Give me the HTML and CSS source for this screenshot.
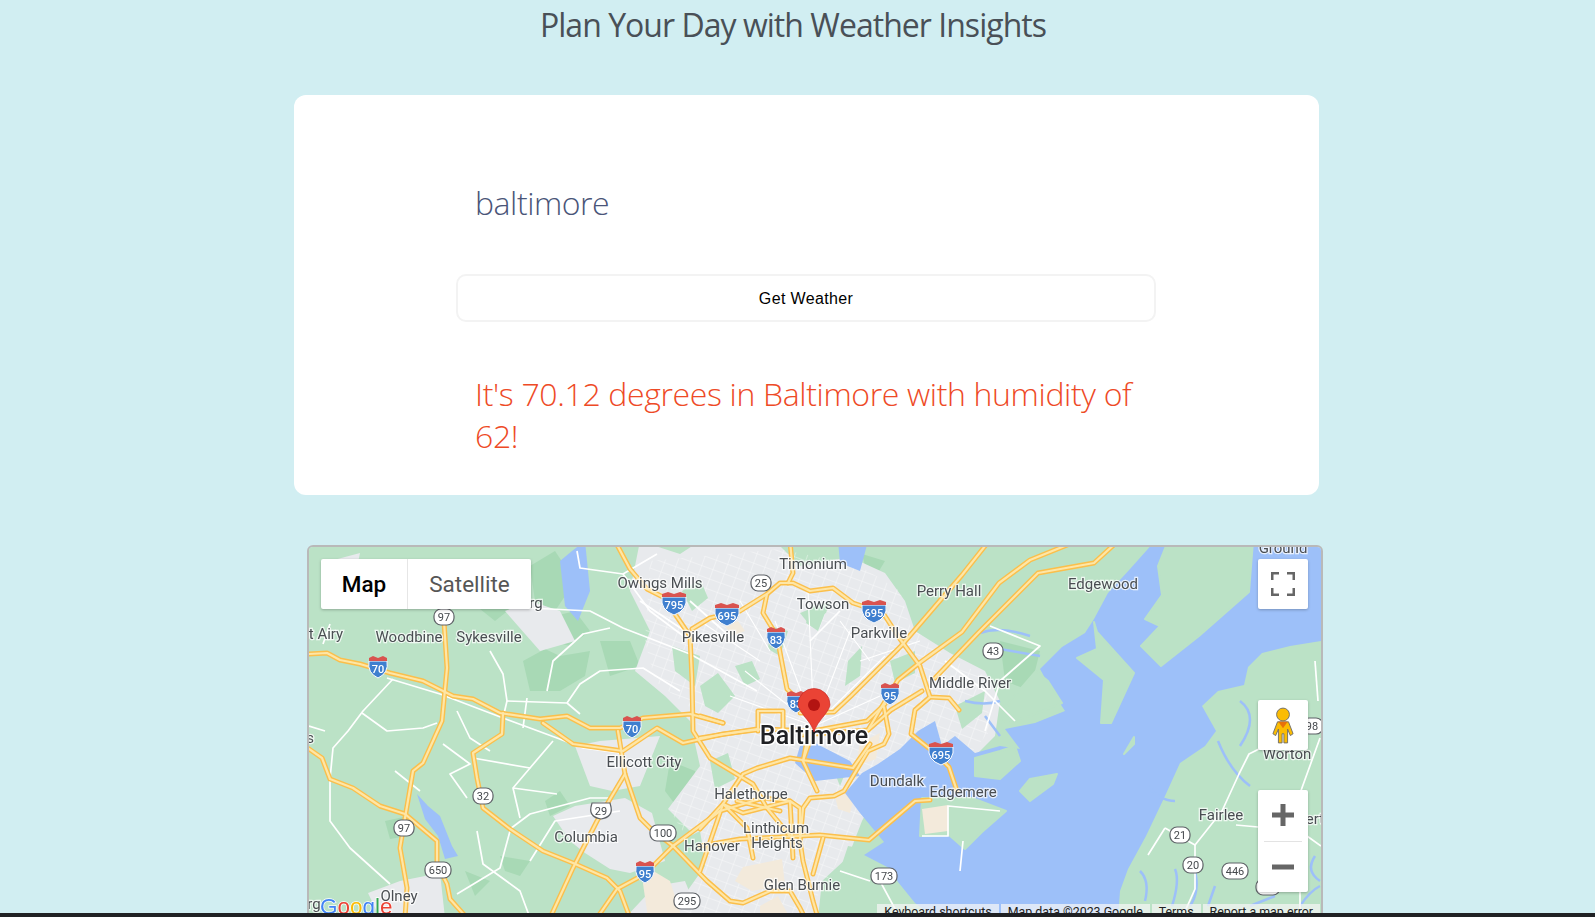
FILE: index.html
```html
<!DOCTYPE html>
<html lang="en">
<head>
<meta charset="utf-8">
<title>Weather Insights</title>
<link rel="stylesheet" href="styles.css">
</head>
<body>
<main class="page">
  <h1 class="title">Plan Your Day with Weather Insights</h1>
  <section class="card">
    <form class="form">
      <div class="city">baltimore</div>
      <button class="btn" type="button">Get Weather</button>
      <p class="result">It's 70.12 degrees in Baltimore with humidity of 62!</p>
    </form>
  </section>
  <section class="map">
    <svg class="map-art" viewBox="309 546 1012 370" width="1012" height="370" xmlns="http://www.w3.org/2000/svg">
      <defs>
        <pattern id="grid" width="12" height="10" patternUnits="userSpaceOnUse" patternTransform="rotate(20)">
          <path d="M0 0H12M0 0V10" fill="none" stroke="#fff" stroke-width="1"/>
        </pattern>
        <g id="yellow">
          <path d="M309 653L327 652L340 659L360 663L390 672L423 680L453 695L473 698L500 712L540 718L567 715L590 727L620 727L643 717L690 713L723 722"/>
          <path d="M543 722L573 743L623 750L657 727L683 742L723 733L763 728L813 730L867 720L885 703"/>
          <path d="M444 620L447 667L442 720L423 762L413 770L405 817L400 847L407 887L405 917"/>
          <path d="M503 712L502 733L473 752L477 777L483 807L510 828L543 850L573 862L607 877L620 890L630 917"/>
          <path d="M309 748L322 757L330 778L353 787L380 805L405 813L437 840L437 863L447 883L450 898L467 917"/>
          <path d="M618 730L625 773L597 820L573 867L550 917"/>
          <path d="M625 773L640 817L650 827L673 845"/>
          <path d="M597 917L617 888L645 873L673 845L720 810L763 797L790 800"/>
          <path d="M615 540L630 568L647 588L667 598L675 613L690 635L692 678L693 730L710 757L753 783L767 807L790 835"/>
          <path d="M673 845L707 880L730 900L743 902L770 890L790 890L800 907L805 917"/>
          <path d="M692 628L710 617L740 610L767 593L780 582L793 582L810 590L833 587L853 602L883 612L900 638L920 665L930 696L949 697L959 709"/>
          <path d="M767 593L763 612L777 635L782 662L787 688L797 698"/>
          <path d="M790 540L793 572L788 582"/>
          <path d="M989 540L962 574L901 645L851 695L834 711L800 712"/>
          <path d="M1118 540L1094 562L1038 572L979 631L935 677"/>
          <path d="M1077 540L1030 559L999 582L962 631L918 663L898 679L884 702L868 729L800 734"/>
          <path d="M930 696L915 709L911 733L930 748L949 766L957 790"/>
          <path d="M922 690L891 709L868 729"/>
          <path d="M884 706L889 733L884 743L868 750L844 790L834 795L810 797L803 807L800 840L803 860L813 900L818 917"/>
          <path d="M930 799L915 800L869 839L820 834L740 838L700 845"/>
          <path d="M700 737L757 728M758 730L758 710L783 710L783 733M700 715L723 722"/>
          <path d="M807 740L803 760L817 790M813 730L803 760M790 757L757 767L743 773L723 803L700 828M790 757L853 767L870 743"/>
          <path d="M700 870L723 803L743 812L790 800L800 807L800 840M723 803L747 827L753 857M793 857L790 800M823 837L813 873M737 800L767 807L780 810"/>
        </g>
      </defs>

      <g class="base">
        <rect class="land" x="309" y="540" width="1012" height="380"/>

        <g class="forest">
          <path d="M335 578L365 568L390 575L360 600L340 598Z"/>
          <path d="M523 660L545 648L560 655L590 650L585 675L560 690L530 690Z"/>
          <path d="M555 615L575 610L590 630L570 645L550 640Z"/>
          <path d="M600 640L630 640L640 665L610 675Z"/>
          <path d="M395 590L420 585L425 600L400 605Z"/>
          <path d="M470 600L500 585L520 600L495 620Z"/>
          <path d="M530 565L555 550L575 580L555 610L535 600Z"/>
          <path d="M670 760L695 770L705 800L680 810L665 790Z"/>
          <path d="M385 820L408 815L408 835L390 838Z"/>
          <path d="M545 800L560 790L570 805L550 815Z"/>
          <path d="M500 855L530 860L520 875L505 870Z"/>
          <path d="M465 870L490 880L475 895Z"/>
          <path d="M862 553L885 560L870 585Z"/>
          <path d="M1000 640L1040 650L1030 690L1005 680Z"/>
        </g>

        <g class="urban">
          <path d="M640 540L680 553L700 540L775 540L800 565L850 556L885 572L905 600L915 630L950 652L985 670L1000 700L995 735L960 770L915 780L985 815L940 835L905 820L880 785L862 820L848 856L822 880L818 917L668 917L705 865L690 830L668 808L700 765L690 720L665 695L635 670L650 630L630 590Z"/>
          <path d="M553 815L575 805L625 797L652 812L665 860L630 872L610 868L585 852L570 840Z"/>
          <path d="M575 745L600 740L660 735L640 785L612 790L590 785Z"/>
          <path d="M368 892L400 880L440 872L445 917L380 917Z"/>
          <path d="M505 610L530 600L560 610L575 640L540 650Z"/>
          <path d="M625 917L655 885L685 880L700 917Z"/>
          <path d="M1040 850L1050 830L1062 858Z"/>
          <path d="M330 560L360 552L355 575Z"/>
        </g>
        <path class="urban-grid" d="M650 560L780 548L860 565L900 590L910 625L945 655L985 675L990 730L955 770L915 780L975 812L940 830L905 815L880 785L855 830L815 900L820 917L670 917L705 865L670 810L705 760L695 710L655 680L645 640Z"/>

        <g class="parks">
          <path d="M682 590L700 578L708 597L692 610Z"/>
          <path d="M812 603L825 612L818 630L806 622Z"/>
          <path d="M700 685L718 672L735 695L718 712L705 705Z"/>
          <path d="M848 660L862 645L860 675L845 685Z"/>
          <path d="M735 665L752 660L760 678L745 685Z"/>
          <path d="M672 645L700 655L695 685L675 670Z"/>
          <path d="M800 612L830 600L826 612L808 622Z"/>
          <path d="M955 705L985 690L982 712L962 728Z"/>
          <path d="M848 845L875 850L858 885L838 875Z"/>
          <path d="M890 660L915 650L915 672L895 682Z"/>
          <path d="M770 625L788 630L780 655L768 648Z"/>
          <path d="M710 760L728 752L735 778L715 788Z"/>
          <path d="M825 880L850 860L860 917L825 917Z"/>
          <path d="M680 840L700 830L705 860L685 865Z"/>
          <path d="M830 760L846 770L840 785Z"/>
        </g>
        <g class="beige">
          <path d="M743 866L782 858L785 884L752 890L735 880Z"/>
          <path d="M835 795L858 782L850 812L838 808Z"/>
          <path d="M860 742L880 732L876 758L856 765Z"/>
          <path d="M640 862L670 880L682 917L648 917Z"/>
          <path d="M760 905L778 895L790 917L760 917Z"/>
          <path d="M725 625L738 620L745 630L732 635Z"/>
        </g>

        <path class="water" d="M845 792L862 772L878 763L900 748L918 730L935 720L942 745L955 735L975 752L1000 745L1020 748L1005 728L1035 722L1065 710L1052 690L1040 668L1062 646L1085 632L1094 618L1108 592L1130 568L1155 540L1321 540L1321 640L1290 645L1262 652L1248 666L1244 684L1218 690L1202 705L1216 730L1205 745L1180 762L1165 795L1146 835L1128 868L1120 890L1118 917L935 917L915 902L898 881L891 868L864 854L884 841L860 812Z"/>
        <g class="water">
          <path d="M800 745L815 742L850 760L860 775L815 780L795 762Z"/>
          <path d="M560 560L572 550L585 540L590 590L578 620L565 605Z"/>
          <path d="M417 793L428 805L440 815L452 845L458 855L445 858L438 835L425 818Z"/>
          <path d="M838 540L868 540L860 570L840 562Z"/>
        </g>
        <g class="water-line">
          <path d="M1172 905Q1180 880 1175 868M1190 905Q1200 890 1195 870M1208 905L1215 885M1145 900Q1150 880 1140 870"/>
          <path d="M1300 905Q1310 890 1320 885M1250 905L1275 895"/>
          <path d="M1172 640Q1180 620 1172 600M1190 615Q1205 612 1212 600"/>
          <path d="M1148 785Q1160 800 1175 800"/>
          <path d="M980 632Q1000 625 1030 635M1000 648L1040 655"/>
          <path d="M1240 700Q1260 715 1240 745M1218 740Q1230 770 1250 785"/>
          <path d="M965 700Q985 705 1000 700M985 715L1000 735"/>
          <path d="M1315 855Q1305 870 1320 880"/>
        </g>

        <g class="land-over">
          <path d="M1168 540L1253 540L1249 591L1199 635L1161 665L1141 645L1160 625L1145 618L1162 594L1158 565Z"/>
          <path d="M1094 621L1097 631L1134 672L1111 722L1101 722L1104 679L1077 657L1097 648Z"/>
          <path d="M1020 790L1030 778L1057 773L1053 783L1030 800Z"/>
          <path d="M1124 753L1134 736L1134 743Z"/>
          <path d="M922 797L972 797L1006 810L982 831L965 848L949 834L920 835Z"/>
          <path d="M975 757L1000 750L1015 745L1020 760L1000 778L975 775Z"/>
          <path d="M1036 670L1048 680L1062 702L1030 715L1000 722L1010 700Z"/>
        </g>
        <g class="beige">
          <path d="M922 808L948 804L948 830L925 833Z"/>
        </g>

        <g class="white">
          <path d="M393 678L363 710L348 730L333 747L330 778"/>
          <path d="M362 712L387 730L423 727L437 722"/>
          <path d="M387 677L440 693L503 717L557 737L583 747L620 752"/>
          <path d="M490 650L503 673L507 700L503 717"/>
          <path d="M507 700L567 702L580 713"/>
          <path d="M567 702L580 683L600 670L643 667L680 690"/>
          <path d="M547 690L553 660L583 633L610 627"/>
          <path d="M530 607L590 610L623 627L690 653L757 690"/>
          <path d="M577 550L580 567L623 573L657 553"/>
          <path d="M623 573L650 610L690 640"/>
          <path d="M473 757L530 767L553 740"/>
          <path d="M530 767L513 787L520 817"/>
          <path d="M513 787L557 793"/>
          <path d="M457 710L470 737L490 750M443 743L470 763L450 773L467 797"/>
          <path d="M510 828L530 813L590 797L610 797"/>
          <path d="M330 777L330 820L350 847L390 883"/>
          <path d="M477 830L483 863L520 890L530 917"/>
          <path d="M510 830L500 867L457 893"/>
          <path d="M527 697L523 727"/>
          <path d="M330 623L323 643M620 810L555 820L530 860"/>
          <path d="M309 725L325 730M420 790L395 770"/>
          <path d="M700 640L640 600M735 640L690 600M810 640L840 610"/>
          <path d="M990 625L1040 645L1000 680L985 730M945 660L985 690L1015 720"/>
          <path d="M1165 827L1195 844L1222 810L1239 773L1249 753L1263 746"/>
          <path d="M1320 737L1290 820M1236 824L1258 826M1165 827L1148 854"/>
          <path d="M1195 844L1195 888L1182 917"/>
          <path d="M1280 860L1300 880L1300 917M1300 830L1321 845"/>
          <path d="M880 880L900 917M840 870L870 880"/>
          <path d="M922 835L948 835L948 805L1000 810M963 840L960 870"/>
          <path d="M1315 660L1318 700"/>
        </g>
        <g class="white-thin">
          <path d="M814 725L745 670M814 725L775 620M814 725L808 590M814 725L850 630M814 725L885 655M814 725L730 695M814 725L880 695"/>
          <path d="M740 600L770 650M700 620L760 660M840 620L870 660M860 660L920 640"/>
        </g>

        <use href="#yellow" class="road-case"/>
        <use href="#yellow" class="road-fill"/>
      </g>

      <g class="labels">
        <text x="1283" y="552">Ground</text>
        <text x="813" y="568">Timonium</text>
        <text x="660" y="587">Owings Mills</text>
        <text x="949" y="595">Perry Hall</text>
        <text x="1103" y="588">Edgewood</text>
        <text x="823" y="608">Towson</text>
        <text x="713" y="641">Pikesville</text>
        <text x="879" y="637">Parkville</text>
        <text x="536" y="607">rg</text>
        <text x="326" y="638">t Airy</text>
        <text x="409" y="641">Woodbine</text>
        <text x="489" y="641">Sykesville</text>
        <text x="970" y="687">Middle River</text>
        <text x="644" y="766">Ellicott City</text>
        <text x="751" y="798">Halethorpe</text>
        <text x="897" y="785">Dundalk</text>
        <text x="963" y="796">Edgemere</text>
        <text x="776" y="832">Linthicum</text>
        <text x="777" y="847">Heights</text>
        <text x="712" y="850">Hanover</text>
        <text x="586" y="841">Columbia</text>
        <text x="802" y="889">Glen Burnie</text>
        <text x="1221" y="819">Fairlee</text>
        <text x="1287" y="758">Worton</text>
        <text x="399" y="900">Olney</text>
        <text x="1315" y="823">ert</text>
        <text x="310" y="742">s</text>
        <text x="314" y="908">rg</text>
      </g>

      <g class="ovals">
        <g><rect x="434" y="608" width="20" height="16" rx="7"/><text x="444" y="620">97</text></g>
        <g><rect x="751" y="574" width="20" height="16" rx="7"/><text x="761" y="586">25</text></g>
        <g><rect x="983" y="642" width="20" height="16" rx="7"/><text x="993" y="654">43</text></g>
        <g><rect x="1302" y="717" width="21" height="16" rx="7"/><text x="1312" y="729">98</text></g>
        <g><rect x="473" y="787" width="20" height="16" rx="7"/><text x="483" y="799">32</text></g>
        <g><path d="M592 802H610L611 806Q613 816 601 818Q589 816 591 806Z"/><text x="601" y="814">29</text></g>
        <g><rect x="394" y="819" width="20" height="16" rx="7"/><text x="404" y="831">97</text></g>
        <g><rect x="650" y="824" width="26" height="16" rx="7"/><text x="663" y="836">100</text></g>
        <g><rect x="1170" y="826" width="20" height="16" rx="7"/><text x="1180" y="838">21</text></g>
        <g><rect x="1183" y="856" width="20" height="16" rx="7"/><text x="1193" y="868">20</text></g>
        <g><rect x="1222" y="862" width="26" height="16" rx="7"/><text x="1235" y="874">446</text></g>
        <g><rect x="425" y="861" width="26" height="16" rx="7"/><text x="438" y="873">650</text></g>
        <g><rect x="871" y="867" width="26" height="16" rx="7"/><text x="884" y="879">173</text></g>
        <g><rect x="674" y="892" width="26" height="16" rx="7"/><text x="687" y="904">295</text></g>
        <g><rect x="1256" y="878" width="24" height="16" rx="7"/></g>
      </g>

      <g class="shields">
        <g><path class="s-blue" d="M369 660H387Q389 672 378 677Q367 672 369 660Z"/><path class="s-red" d="M369 660L369 657L373 655L378 657L383 655L387 657L387 660Z"/><text x="378" y="672">70</text></g>
        <g><path class="s-blue" d="M662 596H686Q688 609 674 614Q660 609 662 596Z"/><path class="s-red" d="M662 596L662 593L668 591L674 593L680 591L686 593L686 596Z"/><text x="674" y="608">795</text></g>
        <g><path class="s-blue" d="M715 607H739Q741 620 727 625Q713 620 715 607Z"/><path class="s-red" d="M715 607L715 604L721 602L727 604L733 602L739 604L739 607Z"/><text x="727" y="619">695</text></g>
        <g><path class="s-blue" d="M767 631H785Q787 643 776 648Q765 643 767 631Z"/><path class="s-red" d="M767 631L767 628L771 626L776 628L781 626L785 628L785 631Z"/><text x="776" y="643">83</text></g>
        <g><path class="s-blue" d="M862 604H886Q888 617 874 622Q860 617 862 604Z"/><path class="s-red" d="M862 604L862 601L868 599L874 601L880 599L886 601L886 604Z"/><text x="874" y="616">695</text></g>
        <g><path class="s-blue" d="M623 720H641Q643 732 632 737Q621 732 623 720Z"/><path class="s-red" d="M623 720L623 717L627 715L632 717L637 715L641 717L641 720Z"/><text x="632" y="732">70</text></g>
        <g><path class="s-blue" d="M881 687H899Q901 699 890 704Q879 699 881 687Z"/><path class="s-red" d="M881 687L881 684L885 682L890 684L895 682L899 684L899 687Z"/><text x="890" y="699">95</text></g>
        <g><path class="s-blue" d="M929 746H953Q955 759 941 764Q927 759 929 746Z"/><path class="s-red" d="M929 746L929 743L935 741L941 743L947 741L953 743L953 746Z"/><text x="941" y="758">695</text></g>
        <g><path class="s-blue" d="M636 865H654Q656 877 645 882Q634 877 636 865Z"/><path class="s-red" d="M636 865L636 862L640 860L645 862L650 860L654 862L654 865Z"/><text x="645" y="877">95</text></g>
        <g><path class="s-blue" d="M787 695H805Q807 707 796 712Q785 707 787 695Z"/><path class="s-red" d="M787 695L787 692L791 690L796 692L801 690L805 692L805 695Z"/><text x="796" y="707">83</text></g>
      </g>

      <text class="city-label" x="814" y="743">Baltimore</text>

      <path class="pin" d="M814 731C811 722 806 718 802 712C799 708 798 705 798 703.500A16 16 0 0 1 830 703.500C830 705 829 708 826 712C822 718 817 722 814 731Z"/>
      <circle class="pin-dot" cx="814" cy="704" r="6"/>

      <text class="logo" x="320" y="913"><tspan class="g-b">G</tspan><tspan class="g-r">o</tspan><tspan class="g-y">o</tspan><tspan class="g-b">g</tspan><tspan class="g-g">l</tspan><tspan class="g-r">e</tspan></text>
    </svg>

    <div class="map-type">
      <span class="map-tab is-active">Map</span>
      <span class="map-tab">Satellite</span>
    </div>

    <div class="ctl ctl-full">
      <svg width="24" height="24" viewBox="0 0 24 24"><path class="ico" d="M1 8V1H8M16 1H23V8M23 16V23H16M8 23H1V16"/></svg>
    </div>

    <div class="ctl ctl-peg">
      <svg width="22" height="37" viewBox="0 0 24 40"><circle class="peg" cx="12" cy="8" r="7"/><path class="peg" d="M6 16H18L23 29L20 31L17 24V39H13V29H11V39H7V24L4 31L1 29Z"/><path class="peg-v" d="M7 16H17L12 23Z"/></svg>
    </div>

    <div class="ctl ctl-zoom">
      <button class="zoom-btn" type="button"><svg width="24" height="24" viewBox="0 0 24 24"><path class="ico-z" d="M12 1V23M1 12H23"/></svg></button>
      <span class="zoom-sep"></span>
      <button class="zoom-btn" type="button"><svg width="24" height="24" viewBox="0 0 24 24"><path class="ico-z" d="M1 12H23"/></svg></button>
    </div>

    <div class="attrib">
      <span class="attrib-item">Keyboard shortcuts</span>
      <span class="attrib-item">Map data ©2023 Google</span>
      <span class="attrib-item">Terms</span>
      <span class="attrib-item">Report a map error</span>
    </div>
  </section>
</main>
<div class="bar"></div>
</body>
</html>
```
FILE: styles.css
```css
* { box-sizing: border-box; }
html, body { margin: 0; height: 100%; }
body {
  display: flex;
  flex-direction: column;
  height: 100vh;
  overflow: hidden;
  background: #d1eef2;
  font-family: "Open Sans", sans-serif;
}
.page { flex: 1; min-height: 0; overflow: hidden; }
.bar { height: 4px; background: #202124; flex: none; }

.title {
  margin: 0;
  padding-right: 9px;
  height: 48px;
  line-height: 50px;
  text-align: center;
  font-size: 32px;
  font-weight: 400;
  letter-spacing: -0.97px;
  color: #495057;
}
.card {
  width: 1025px;
  height: 400px;
  margin: 47px 0 0 294px;
  padding: 76px 0 0 162px;
  background: #fff;
  border-radius: 12px;
}
.form { width: 700px; }
.city {
  padding-left: 19px;
  height: 64px;
  line-height: 64px;
  font-size: 32px;
  font-weight: 300;
  letter-spacing: -0.45px;
  color: #4a5578;
}
.btn {
  display: block;
  width: 100%;
  height: 48px;
  margin-top: 39px;
  padding-top: 2px;
  background: #fff;
  border: 2px solid #f3f3f3;
  border-radius: 10px;
  font: 16px "Liberation Sans", Arial, sans-serif;
  letter-spacing: .35px;
  color: #000;
}
.result {
  margin: 51px 0 0;
  padding: 0 19px;
  font-size: 32px;
  font-weight: 300;
  line-height: 42px;
  letter-spacing: -0.35px;
  color: #ee4a26;
}

.map {
  position: relative;
  width: 1016px;
  height: 374px;
  margin: 50px 0 0 307px;
  border: 2px solid #b9b9b9;
  border-radius: 6px;
  overflow: hidden;
}
.map-art { display: block; filter: blur(.35px); }
.land { fill: #bbe2c6; }
.forest path { fill: #a8d9b5; }
.urban path { fill: #e8eaed; }
.urban-grid { fill: url(#grid); opacity: .7; }
.parks path { fill: #bbe2c6; }
.beige path { fill: #f3eadb; }
.water, .water path { fill: #9dc0f9; }
.water-line path { fill: none; stroke: #9dc0f9; stroke-width: 2.5; }
.land-over path { fill: #bbe2c6; stroke: #bbe2c6; stroke-width: 2; stroke-linejoin: round; }
.white path { fill: none; stroke: #fff; stroke-width: 1.7; stroke-linejoin: round; }
.white-thin path { fill: none; stroke: #fff; stroke-width: 1.1; }
.road-case { fill: none; stroke: #fbbf4b; stroke-width: 5; stroke-linejoin: round; stroke-linecap: round; }
.road-fill { fill: none; stroke: #fee6a6; stroke-width: 2.2; stroke-linejoin: round; stroke-linecap: round; }

.labels text {
  font: 15px Roboto, sans-serif;
  text-anchor: middle;
  fill: #4a4e52;
  stroke: #fff;
  stroke-width: 2.5px;
  stroke-opacity: .75;
  paint-order: stroke;
}
.city-label {
  font: 500 25px Roboto, sans-serif;
  text-anchor: middle;
  fill: #202124;
  stroke: #fff;
  stroke-width: 3px;
  paint-order: stroke;
}
.ovals rect, .ovals path { fill: #fff; stroke: #5f6368; stroke-width: 1.2; }
.ovals text {
  font: 11px Roboto, sans-serif;
  text-anchor: middle;
  fill: #45494d;
}
.s-blue { fill: #3f7fcf; stroke: #fff; stroke-width: 1; }
.s-red { fill: #d9534f; }
.shields text {
  font: 500 11px Roboto, sans-serif;
  text-anchor: middle;
  fill: #fff;
}
.pin { fill: #ea4335; stroke: #c5221f; stroke-width: .6; }
.pin-dot { fill: #b31412; }
.logo {
  font: 22.5px "Liberation Sans", Arial, sans-serif;
  stroke: #fff;
  stroke-width: 1.5px;
  paint-order: stroke;
}
.g-b { fill: #4285f4; }
.g-r { fill: #ea4335; }
.g-y { fill: #fbbc05; }
.g-g { fill: #34a853; }

.map-type {
  position: absolute;
  left: 12px;
  top: 12px;
  display: flex;
  height: 50px;
  background: #fff;
  border-radius: 2px;
  box-shadow: 0 1px 3px rgba(0, 0, 0, .25);
  font-family: Roboto, sans-serif;
  font-size: 22.5px;
  color: #565656;
}
.map-tab {
  display: flex;
  align-items: center;
  justify-content: center;
  width: 123px;
}
.map-tab.is-active {
  width: 87px;
  color: #000;
  font-weight: 500;
  border-right: 1px solid #e6e6e6;
}
.ctl {
  position: absolute;
  left: 949px;
  width: 50px;
  display: flex;
  align-items: center;
  justify-content: center;
  background: #fff;
  border-radius: 2px;
  box-shadow: 0 1px 3px rgba(0, 0, 0, .25);
}
.ctl-full { top: 12px; height: 50px; }
.ctl-peg { top: 153px; height: 50px; }
.ctl-zoom { top: 243px; height: 102px; flex-direction: column; }
.ico { fill: none; stroke: #666; stroke-width: 3; }
.ico-z { fill: none; stroke: #666; stroke-width: 5; }
.peg { fill: #fbbc04; stroke: #6b6b6b; stroke-width: 1; }
.peg-v { fill: #e8710a; }
.zoom-btn {
  flex: 1;
  width: 100%;
  padding: 0;
  border: 0;
  background: none;
  display: flex;
  align-items: center;
  justify-content: center;
}
.zoom-sep { width: 38px; height: 1px; background: #e3e3e3; flex: none; }
.attrib {
  position: absolute;
  right: 1px;
  top: 357px;
  display: flex;
  gap: 2px;
  height: 20px;
  font: 12.4px/16px Roboto, sans-serif;
  color: #222;
}
.attrib-item {
  padding: 0 7px;
  background: rgba(245, 245, 245, .72);
}
```
